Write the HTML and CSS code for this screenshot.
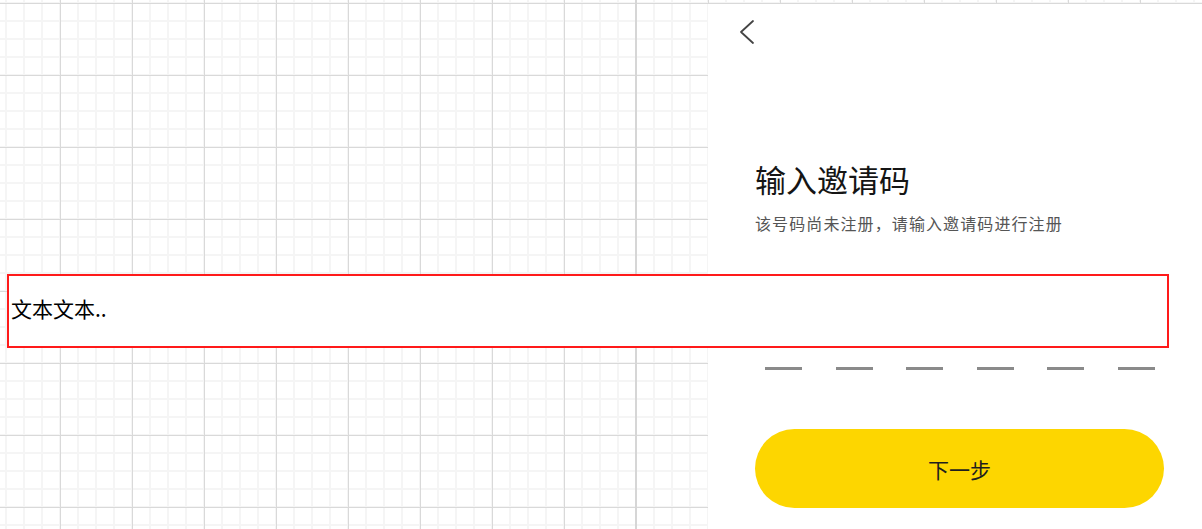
FILE: index.html
```html
<!DOCTYPE html>
<html lang="zh-CN">
<head>
<meta charset="utf-8">
<title>输入邀请码</title>
<link rel="stylesheet" href="styles.css">
</head>
<body>
<div class="page">
  <div class="canvas"></div>
  <section class="panel">
    <button class="back" aria-label="返回">
      <svg width="16" height="26" viewBox="0 0 16 26"><polyline points="14,2 2,13 14,24" fill="none" stroke="#444" stroke-width="1.8" stroke-linecap="round" stroke-linejoin="round"/></svg>
    </button>
    <h1 class="title">输入邀请码</h1>
    <p class="subtitle">该号码尚未注册，请输入邀请码进行注册</p>
    <div class="code">
      <span class="slot"></span><span class="slot"></span><span class="slot"></span><span class="slot"></span><span class="slot"></span><span class="slot"></span>
    </div>
    <button class="next">下一步</button>
  </section>
  <div class="overlay">文本文本..</div>
</div>
</body>
</html>
```

FILE: styles.css
```css
html, body {
  margin: 0;
  padding: 0;
}
body {
  font-family: "Noto Sans CJK SC", "Noto Sans", sans-serif;
  background: #fff;
}
.page {
  position: relative;
  width: 1202px;
  height: 529px;
  display: flex;
  overflow: hidden;
  background:
    linear-gradient(to right, transparent 635px, #d6d6d6 635px, #d6d6d6 637px, transparent 637px) no-repeat 0 0 / 100% 100%,
    linear-gradient(to right, #d9d9d9 1px, transparent 1px) 60px 3px / 72px 72px,
    linear-gradient(to bottom, #d9d9d9 1px, transparent 1px) 60px 3px / 72px 72px,
    linear-gradient(to right, #f5f5f5 2px, transparent 2px) 5px 3px / 18px 18px,
    linear-gradient(to bottom, #f5f5f5 2px, transparent 2px) 5px 2px / 18px 18px,
    #fff;
}
.canvas {
  flex: 0 0 708px;
}
.panel {
  flex: 1;
  margin-top: 4px;
  background: #fff;
  display: flex;
  flex-direction: column;
  padding-left: 47px;
  padding-right: 38px;
}
.back {
  align-self: flex-start;
  margin: 15px 0 0 -16px;
  padding: 0;
  border: 0;
  background: none;
  width: 16px;
  height: 26px;
  display: block;
}
.back svg {
  display: block;
}
.title {
  margin: 114px 0 0 0;
  font-size: 31px;
  line-height: 40px;
  font-weight: 400;
  color: #151515;
}
.subtitle {
  margin: 12px 0 0 0;
  font-size: 16px;
  letter-spacing: 1.1px;
  line-height: 24px;
  color: #555;
}
.code {
  margin: 132px 0 0 10px;
  width: 390px;
  display: flex;
  justify-content: space-between;
}
.slot {
  width: 37px;
  height: 3px;
  background: #8a8a8a;
}
.next {
  margin-top: 59px;
  width: 409px;
  height: 79px;
  border: 0;
  border-radius: 40px;
  background: #fdd600;
  font-family: inherit;
  font-size: 21px;
  color: #1e1e1e;
  padding: 0;
}
.overlay {
  position: absolute;
  left: 7px;
  top: 274px;
  width: 1162px;
  height: 74px;
  box-sizing: border-box;
  border: 2px solid #ff1a1a;
  background: #fff;
  font-size: 21px;
  line-height: 24px;
  color: #000;
  padding: 20px 0 0 2px;
}
```
